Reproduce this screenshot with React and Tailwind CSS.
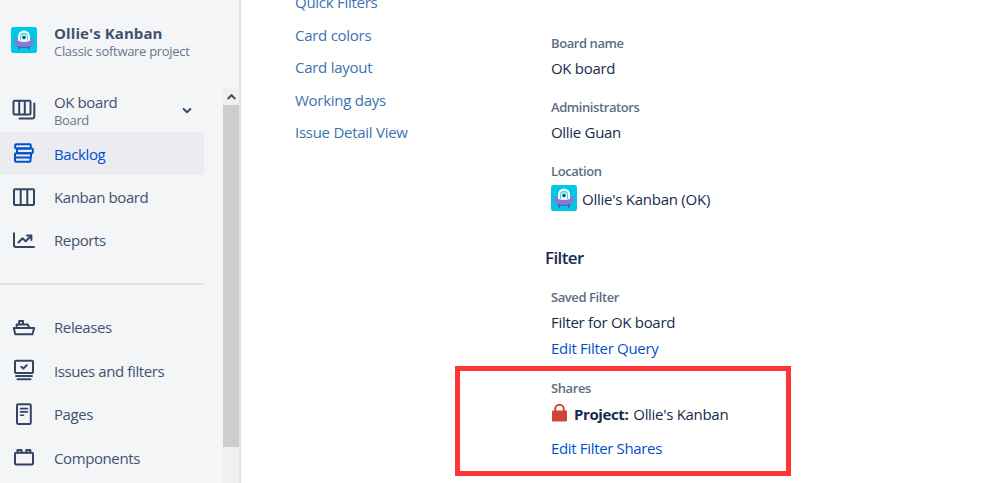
/**
 * Purpose: Board settings page — project sidebar, settings links and filter details.
 */
function ProjectAvatar() {
  return (
    <svg className="h-[26px] w-[26px] shrink-0" viewBox="0 0 26 26">
      <rect width="26" height="26" rx="2.5" fill="#00c7e5" />
      <path d="M8.9 18l-.8 4.6M17.1 18l.8 4.6" stroke="#5e4db2" strokeWidth="1.5" />
      <ellipse cx="13" cy="15" rx="10.3" ry="5" fill="#8777d9" />
      <path d="M5.5 18.4c4.4 2.2 10.6 2.2 15 0-1.4 1.9-4 2.6-7.5 2.6s-6.100-.7-7.500-2.600z" fill="#6554c0" />
      <path d="M7 13.800V9.500a6 6 0 0 1 12 0v4.300c-3 1.700-9 1.700-12 0z" fill="#fff" />
      <path d="M8.900 13.900V9.900a4.100 4.100 0 0 1 8.200 0v4c-2 1-6.200 1-8.200 0z" fill="#4fd6ea" />
      <path d="M10 14.300v-3.900a3 3 0 0 1 6 0v3.900c-2 .4-4 .4-6 0z" fill="#fff" />
      <circle cx="13" cy="10.500" r="2" fill="#00a3bf" />
      <circle cx="13" cy="10.500" r="1.300" fill="#253858" />
    </svg>
  );
}

function NavIcon({ name }) {
  return (
    <svg
      className="h-6 w-6 shrink-0"
      viewBox="0 0 24 24"
      fill="none"
      stroke="currentColor"
      strokeWidth="2"
      strokeLinecap="round"
      strokeLinejoin="round"
    >
      {name === 'boards' && (
        <>
          <rect x="1.5" y="3.8" width="17" height="13.7" rx="1" />
          <path d="M7.2 4v13M12.8 4v13M22.3 6.5v13a2 2 0 0 1-2 2H7.5" />
        </>
      )}
      {name === 'backlog' && (
        <>
          <rect x="3.2" y="2.2" width="15.6" height="4.4" rx="1" />
          <rect x="5" y="6.6" width="15.8" height="4.6" rx="1" />
          <rect x="3" y="11.2" width="16" height="4.4" rx="1" />
          <path d="M3 15.5v3.2a1 1 0 0 0 1 1h13.5a1 1 0 0 0 1-1v-3.2" />
        </>
      )}
      {name === 'board' && (
        <>
          <rect x="2" y="3.2" width="20" height="15.8" rx="1" />
          <path d="M8.7 4v15M15.3 4v15" />
        </>
      )}
      {name === 'reports' && (
        <>
          <path d="M2 4.3V16a2 2 0 0 0 2 2h18" />
          <path d="M6.5 13.5l4-4.2 3.2 3 5-5M15 6.600h4.400V11" />
        </>
      )}
      {name === 'releases' && (
        <>
          <path d="M1.8 12h20.4l-1.8 6.2H3.2z" />
          <path d="M4.7 12V8.5h11L17.500 12M7.200 8.500V5h3.800v3.500" />
        </>
      )}
      {name === 'issues' && (
        <>
          <rect x="3" y="1.7" width="18" height="12.2" rx="1" />
          <path d="M9.3 7.8l2 1.8 3.4-3.4M4 17h16M5.5 20.3h13" />
        </>
      )}
      {name === 'pages' && (
        <>
          <rect x="5" y="1.2" width="13.8" height="19.7" rx="1.2" />
          <path d="M8.5 5.6h7M8.5 8.9h7M8.5 12.2h3" strokeWidth="1.6" />
        </>
      )}
      {name === 'components' && (
        <>
          <rect x="3" y="6.8" width="18" height="11.6" rx="1" />
          <path d="M5.5 6.8V4h4v2.8M14.3 6.8V4h4v2.8" />
        </>
      )}
    </svg>
  );
}

function NavItem({ icon, label, active }) {
  return (
    <div
      className={`flex h-[43.4px] w-[204px] items-center rounded-r-[3px] pl-3 ${
        active ? 'bg-[#ebecf0] text-[#0052cc]' : 'text-[#42526e]'
      }`}
    >
      <span className={`pt-0.5 ${active ? '' : 'text-[#344563]'}`}>
        <NavIcon name={icon} />
      </span>
      <span className="ml-[18px] pt-px text-[15px] leading-5 tracking-[-0.4px]">{label}</span>
    </div>
  );
}

function Sidebar() {
  return (
    <aside className="flex w-[241px] shrink-0 flex-col border-r-2 border-[#e2e3e6] bg-[#f4f5f7]">
      <div className="flex h-[87px] pl-[11px] pt-[27px]">
        <ProjectAvatar />
        <div className="-mt-1 ml-[17px] whitespace-nowrap">
          <div className="text-[15px] font-bold leading-5 tracking-[0.1px] text-[#42526e]">Ollie's Kanban</div>
          <div className="pt-px text-[13px] leading-[15px] tracking-[-0.3px] text-[#6b778c]">
            Classic software project
          </div>
        </div>
      </div>
      <div className="flex min-h-0 flex-1">
        <nav className="w-[223px] overflow-hidden">
          <div className="flex h-[44.5px] pl-3">
            <div className="pt-[10px] text-[#344563]">
              <NavIcon name="boards" />
            </div>
            <div className="ml-[18px] w-[127px] pt-[5px]">
              <div className="text-[15px] leading-5 tracking-[-0.4px] text-[#42526e]">OK board</div>
              <div className="pt-px text-[13px] leading-[15px] tracking-[-0.35px] text-[#6b778c]">Board</div>
            </div>
            <svg className="mt-[18px] h-3 w-3" viewBox="0 0 12 12" fill="none">
              <path d="M2.6 4L6 7.2 9.4 4" stroke="#344563" strokeWidth="2" strokeLinecap="round" />
            </svg>
          </div>
          <NavItem icon="backlog" label="Backlog" active />
          <NavItem icon="board" label="Kanban board" />
          <NavItem icon="reports" label="Reports" />
          <div className="mb-[20.5px] mt-[21px] h-0.5 w-[204px] bg-[#dfe1e6]" />
          <NavItem icon="releases" label="Releases" />
          <NavItem icon="issues" label="Issues and filters" />
          <NavItem icon="pages" label="Pages" />
          <NavItem icon="components" label="Components" />
        </nav>
        <div className="flex w-4 flex-col bg-[#f0f0f0]">
          <div className="flex h-[18px] items-center justify-center pt-px">
            <svg className="h-3 w-3" viewBox="0 0 12 12" fill="none">
              <path d="M2.7 8L6.5 4.2 10.3 8" stroke="#505050" strokeWidth="2" />
            </svg>
          </div>
          <div className="h-[342px] bg-[#cdcdcd]" />
        </div>
      </div>
    </aside>
  );
}

function SettingsLinks() {
  return (
    <ul className="-mt-2 ml-[54px] w-[160px] shrink-0 text-[15px] leading-[32.5px] tracking-[-0.27px] text-[#3b73af]">
      <li className="-mt-1.5">Quick Filters</li>
      <li>Card colors</li>
      <li>Card layout</li>
      <li>Working days</li>
      <li>Issue Detail View</li>
    </ul>
  );
}

function Label({ children }) {
  return (
    <div className="text-[13px] font-semibold leading-5 tracking-[-0.42px] text-[#5e6c84]">{children}</div>
  );
}

function Field({ label, children }) {
  return (
    <div className="h-16 pl-24">
      <Label>{label}</Label>
      <div className="pt-[5px] leading-5">{children}</div>
    </div>
  );
}

function BoardDetails() {
  return (
    <main className="w-[336px] whitespace-nowrap pt-[33px] text-[15px] tracking-[-0.3px] text-[#172b4d]">
      <Field label="Board name">OK board</Field>
      <Field label="Administrators">Ollie Guan</Field>
      <div className="h-[86px] pl-24">
        <Label>Location</Label>
        <div className="mt-1 flex items-center gap-[5px]">
          <ProjectAvatar />
          <span className="pt-0.5 tracking-[-0.25px]">Ollie's Kanban (OK)</span>
        </div>
      </div>
      <h2 className="h-10 pl-[90px] text-[17px] font-semibold leading-[22px] tracking-[-0.6px]">Filter</h2>
      <Field label="Saved Filter">Filter for OK board</Field>
      <a className="-mt-[13px] block h-7 pl-24 leading-5 text-[#0052cc]">Edit Filter Query</a>
      <section className="h-[110px] border-[5px] border-[#ff3434] pl-[91px] pt-[7px]">
        <Label>Shares</Label>
        <div className="mt-1 flex h-6 items-center">
          <svg className="-mt-1 mr-1.5 h-[19px] w-[17px]" viewBox="0 0 17 19">
            <path d="M4.2 9V6a4.3 4.3 0 0 1 8.6 0v3" fill="none" stroke="#d04437" strokeWidth="2" />
            <rect x="1" y="7.5" width="15" height="11" rx="1" fill="#d04437" />
          </svg>
          <b className="mr-[5px] tracking-[-0.4px]">Project:</b>
          <span>Ollie's Kanban</span>
        </div>
        <a className="mt-3 block leading-5 tracking-[-0.34px] text-[#0052cc]">Edit Filter Shares</a>
      </section>
      <div className="pl-24 pt-0.5">
        <Label>Filter</Label>
      </div>
    </main>
  );
}

export default function App() {
  return (
    <div className="flex h-[483px] w-[999px] overflow-hidden bg-white font-['Open_Sans','Noto_Sans',sans-serif]">
      <Sidebar />
      <SettingsLinks />
      <BoardDetails />
    </div>
  );
}
